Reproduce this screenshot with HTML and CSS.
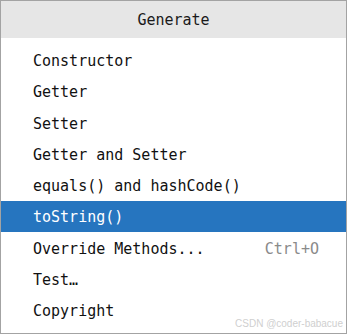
FILE: index.html
```html
<!DOCTYPE html>
<html>
<head>
<meta charset="utf-8">
<link rel="stylesheet" href="styles.css">
</head>
<body>
<div class="popup">
  <div class="header">Generate</div>
  <ul class="menu">
    <li class="item">Constructor</li>
    <li class="item">Getter</li>
    <li class="item">Setter</li>
    <li class="item">Getter and Setter</li>
    <li class="item">equals() and hashCode()</li>
    <li class="item selected">toString()</li>
    <li class="item"><span>Override Methods...</span><span class="shortcut">Ctrl+O</span></li>
    <li class="item">Test…</li>
    <li class="item">Copyright</li>
  </ul>
  <div class="watermark">CSDN @coder-babacue</div>
</div>
</body>
</html>
```
FILE: styles.css
```css
html, body {
  margin: 0;
  padding: 0;
  background: #ffffff;
}
.popup {
  position: relative;
  box-sizing: border-box;
  width: 347px;
  height: 334px;
  border: 1px solid #a3a3a3;
  background: #ffffff;
  font-family: "DejaVu Sans Mono", monospace;
  font-size: 15px;
  color: #111111;
  overflow: hidden;
}
.header {
  box-sizing: border-box;
  height: 37px;
  padding-top: 1px;
  background: #e6e6e6;
  display: flex;
  align-items: center;
  justify-content: center;
  color: #1a1a1a;
}
.menu {
  list-style: none;
  margin: 0;
  padding: 6.3px 0 0 0;
}
.item {
  box-sizing: border-box;
  height: 31.3px;
  display: flex;
  align-items: center;
  justify-content: space-between;
  padding: 2px 27px 0 32px;
  white-space: pre;
}
.item.selected {
  background: #2675bf;
  color: #ffffff;
}
.shortcut {
  color: #8a8a8a;
}
.watermark {
  position: absolute;
  right: 3px;
  bottom: 4px;
  font-family: "Liberation Sans", Arial, sans-serif;
  font-size: 10px;
  color: #cfcfcf;
}
```
